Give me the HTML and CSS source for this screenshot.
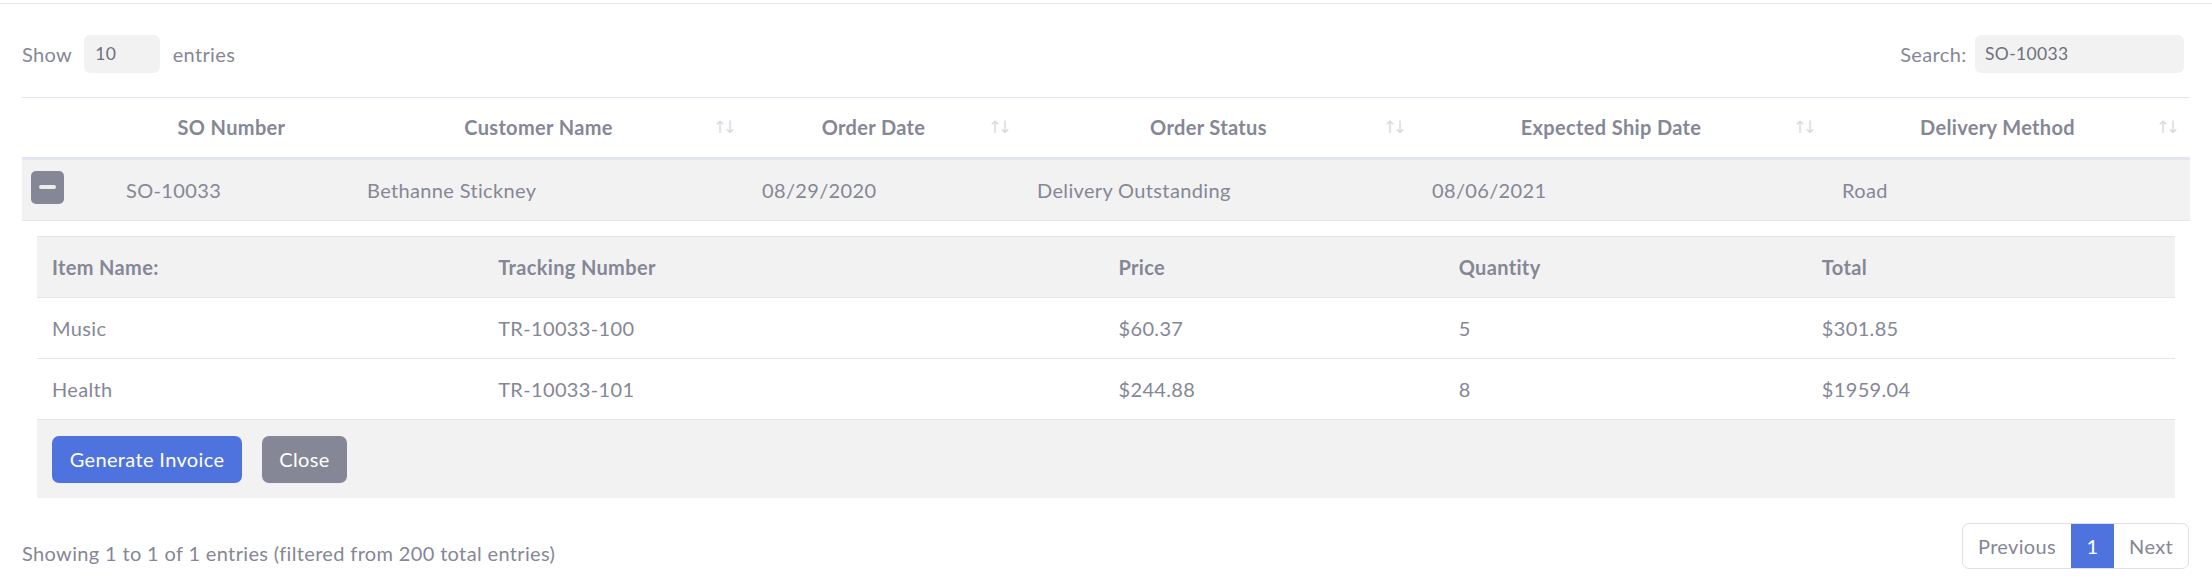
FILE: index.html
```html
<!DOCTYPE html>
<html>
<head>
<meta charset="utf-8">
<link rel="stylesheet" href="styles.css">
</head>
<body>
<div class="topbar"></div>
<div class="wrapper">
  <div class="controls">
    <div class="length">Show <span class="select">10</span> entries</div>
    <div class="search">Search: <span class="input">SO-10033</span></div>
  </div>
  <table class="orders">
    <colgroup>
      <col class="c-ctrl"><col class="c-so"><col class="c-cust"><col class="c-date"><col class="c-status"><col class="c-ship"><col class="c-method">
    </colgroup>
    <thead>
      <tr>
        <th class="ctrl"></th>
        <th class="center">SO Number</th>
        <th class="center sorting">Customer Name</th>
        <th class="center sorting">Order Date</th>
        <th class="center sorting">Order Status</th>
        <th class="center sorting">Expected Ship Date</th>
        <th class="center sorting">Delivery Method</th>
      </tr>
    </thead>
    <tbody>
      <tr class="shown">
        <td class="ctrl"><span class="toggle"><span class="bar"></span></span></td>
        <td>SO-10033</td>
        <td>Bethanne Stickney</td>
        <td>08/29/2020</td>
        <td>Delivery Outstanding</td>
        <td>08/06/2021</td>
        <td>Road</td>
      </tr>
      <tr class="child">
        <td colspan="7">
          <table class="items">
            <colgroup>
              <col class="i-name"><col class="i-track"><col class="i-price"><col class="i-qty"><col class="i-total">
            </colgroup>
            <thead>
              <tr><th>Item Name:</th><th>Tracking Number</th><th>Price</th><th>Quantity</th><th>Total</th></tr>
            </thead>
            <tbody>
              <tr><td>Music</td><td>TR-10033-100</td><td>$60.37</td><td>5</td><td>$301.85</td></tr>
              <tr><td>Health</td><td>TR-10033-101</td><td>$244.88</td><td>8</td><td>$1959.04</td></tr>
            </tbody>
            <tfoot>
              <tr><td colspan="5"><div class="actions"><span class="btn btn-primary">Generate Invoice</span><span class="btn btn-secondary">Close</span></div></td></tr>
            </tfoot>
          </table>
        </td>
      </tr>
    </tbody>
  </table>
  <div class="bottom">
    <div class="info">Showing 1 to 1 of 1 entries (filtered from 200 total entries)</div>
    <ul class="pagination">
      <li class="page">Previous</li>
      <li class="page active">1</li>
      <li class="page">Next</li>
    </ul>
  </div>
</div>
</body>
</html>
```

FILE: styles.css
```css
* { box-sizing: border-box; }
html, body { margin: 0; padding: 0; background: #fff; }
body {
  font-family: "Lato", "Noto Sans", sans-serif;
  font-size: 20px;
  line-height: 1.5;
  letter-spacing: 0.35px;
  color: #858796;
}
.topbar { height: 4px; border-bottom: 1px solid #e3e6f0; }
.wrapper { padding: 0 22px; }
.controls {
  margin-top: 31px;
  display: flex;
  justify-content: space-between;
  align-items: center;
  height: 38px;
}
.length, .search { display: flex; align-items: center; white-space: pre; }
.search { margin-right: 6px; }
.select, .input {
  display: inline-block;
  height: 38px;
  line-height: 38px;
  background: #f2f2f2;
  border-radius: 6px;
  font-size: 17.5px;
  color: #6e707e;
  padding: 0 10px;
}
.select { width: 76px; margin: 0 7px; padding-left: 11px; }
.input { width: 209px; margin-left: 3px; }

table { border-collapse: collapse; width: 100%; }
.orders { table-layout: fixed; margin-top: 24px; margin-bottom: 8px; border-top: 1px solid #e3e6f0; }
.c-ctrl { width: 89px; }
.c-so { width: 241px; }
.c-cust { width: 395px; }
.c-date { width: 275px; }
.c-status { width: 395px; }
.c-ship { width: 410px; }
.c-method { width: 363px; }

.orders > thead th {
  font-weight: 700;
  padding: 14px 15px 15px;
  border-bottom: 3px solid #e3e6f0;
  text-align: left;
  position: relative;
  white-space: nowrap;
}
.orders > thead th.center { text-align: center; }
.orders > thead th.sorting { padding-right: 37px; }
.orders > thead th.sorting::before,
.orders > thead th.sorting::after {
  position: absolute;
  top: 14px;
  font-family: "DejaVu Sans", sans-serif;
  font-weight: 400;
  font-size: 17px;
  letter-spacing: 0;
  opacity: 0.3;
  line-height: 30px;
}
.orders > thead th.sorting::before { content: "\2191"; right: 20px; }
.orders > thead th.sorting::after { content: "\2193"; right: 10px; }

.orders > tbody > tr.shown > td {
  background: #f2f2f2;
  padding: 15px;
  border-bottom: 1px solid #e3e6f0;
  white-space: nowrap;
}
.orders > tbody > tr.shown > td.ctrl { padding: 10px 0 16px 9px; vertical-align: middle; }
.toggle {
  display: flex;
  align-items: center;
  justify-content: center;
  width: 33px;
  height: 33px;
  background: #858796;
  border-radius: 5px;
}
.toggle .bar { width: 17px; height: 4px; border-radius: 2px; background: #ececef; }

.orders > tbody > tr.child > td { padding: 15px; }

.items { table-layout: fixed; border-top: 1px solid #e3e6f0; }
.i-name { width: 446px; }
.i-track { width: 620px; }
.i-price { width: 340px; }
.i-qty { width: 363px; }
.i-total { width: 368px; }
.items th {
  background: #f2f2f2;
  font-weight: 700;
  text-align: left;
  padding: 15px;
  border-bottom: 1px solid #e3e6f0;
}
.items tbody td { padding: 15px; border-bottom: 1px solid #e3e6f0; }
.items tfoot td { background: #f2f2f2; padding: 16px 15px 15px; }
.actions { display: flex; gap: 20px; }
.btn {
  display: inline-block;
  color: #fff;
  padding: 8px 15px;
  line-height: 31px;
  border-radius: 7px;
}
.btn-primary { background: #4e73df; width: 190px; text-align: center; }
.btn-secondary { background: #858796; width: 85px; text-align: center; }

.bottom { display: flex; justify-content: space-between; align-items: flex-start; }
.info { padding-top: 17px; line-height: 30px; white-space: nowrap; }
.pagination {
  list-style: none;
  margin: 2px 1px 0 0;
  padding: 0;
  display: flex;
  border: 1px solid #dddfeb;
  border-radius: 7px;
  overflow: hidden;
  height: 46px;
}
.page { padding: 0 15px; line-height: 44px; color: #858796; }
.page + .page { border-left: 1px solid #dddfeb; }
.page.active { background: #4e73df; color: #fff; border-color: #4e73df; width: 42px; text-align: center; padding: 0; }
.page.active + .page { border-left-color: #4e73df; }
```
